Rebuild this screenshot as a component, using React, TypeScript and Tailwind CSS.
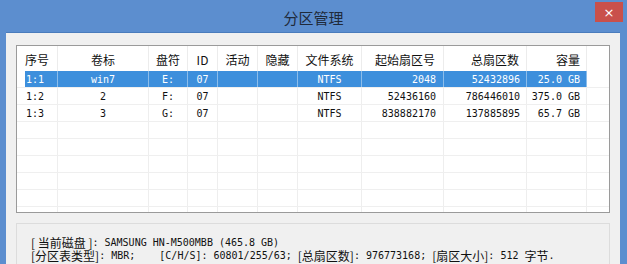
const cols = "grid grid-cols-[33px_91px_39px_30px_40px_40px_64px_82px_83px_60px_1fr]";

const headers = [
  { t: "序号", a: "justify-start" },
  { t: "卷标", a: "justify-center" },
  { t: "盘符", a: "justify-center" },
  { t: "ID", a: "justify-center" },
  { t: "活动", a: "justify-center" },
  { t: "隐藏", a: "justify-center" },
  { t: "文件系统", a: "justify-center" },
  { t: "起始扇区号", a: "justify-end pr-[8px]" },
  { t: "总扇区数", a: "justify-end pr-[7px]" },
  { t: "容量", a: "justify-end pr-[6px]" },
];

const rows = [
  ["1:1", "win7", "E:", "07", "", "", "NTFS", "2048", "52432896", "25.0 GB"],
  ["1:2", "2", "F:", "07", "", "", "NTFS", "52436160", "786446010", "375.0 GB"],
  ["1:3", "3", "G:", "07", "", "", "NTFS", "838882170", "137885895", "65.7 GB"],
];

const align = [
  "justify-start pl-[1px]",
  "justify-center",
  "justify-center",
  "justify-center",
  "justify-center",
  "justify-center",
  "justify-center",
  "justify-end pr-[7px]",
  "justify-end pr-[6px]",
  "justify-end pr-[6px]",
];

const mono = "font-['DejaVu_Sans_Mono','Liberation_Mono',monospace]";
const cjk = "font-['Noto_Sans_CJK_SC','Liberation_Sans',sans-serif]";
const cjkIn = `${cjk} inline-block align-top h-[13px] text-[12px] leading-[13px]`;

function Row({ cells, selected }: { cells: string[]; selected?: boolean }) {
  return (
    <div className={`${cols} h-[17px] border-b border-[#efefef] pl-[8px]`}>
      {cells.map((c, i) => (
        <div
          key={i}
          className={`flex items-center pt-[2px] border-r text-[10px] leading-none ${mono} ${align[i]} ${
            selected ? "bg-[#3d8fdc] text-white border-[#8cbdea]" : "text-[#111] border-[#eeeeee]"
          }`}
        >
          {c}
        </div>
      ))}
      <div />
    </div>
  );
}

export default function App() {
  return (
    <div className="w-[627px] h-[264px] overflow-hidden bg-[#5c8ecf] flex flex-col">
      <div className="h-[32px] relative flex items-center justify-center pt-[4px]">
        <span className={`text-[15px] text-[#1f2a3a] ${cjk}`}>分区管理</span>
        <div className="absolute right-[4px] top-[2px] w-[28px] h-[20px] bg-[#c9504b] flex items-center justify-center text-white text-[13px] leading-none font-['DejaVu_Sans',sans-serif]">
          ×
        </div>
      </div>
      <div className="flex-1 ml-[6px] mr-[7px] bg-[#f0f0f0] border-t border-[#4a7cbc] px-[10px] pt-[12px] flex flex-col">
        <div className="h-[168px] border border-[#9a9a9a] bg-white overflow-hidden">
          <div className={`${cols} h-[25px] pl-[8px]`}>
            {headers.map((h, i) => (
              <div
                key={i}
                className={`flex items-center pt-[3px] border-r border-[#ececec] text-[12px] text-[#111] ${cjk} ${h.a}`}
              >
                {h.t}
              </div>
            ))}
            <div />
          </div>
          {rows.map((r, i) => (
            <Row key={i} cells={r} selected={i === 0} />
          ))}
          {Array.from({ length: 6 }).map((_, i) => (
            <Row key={"e" + i} cells={["", "", "", "", "", "", "", "", "", ""]} />
          ))}
        </div>
        <div className="mt-[10px] flex-1 border border-[#dcdcdc] border-b-0 pl-[14px] pt-[12px] text-[#111]">
          <div className={`${mono} text-[10px] leading-[13px] h-[13px] whitespace-pre`}>
            <span className={cjkIn}>[ 当前磁盘 ]</span>: SAMSUNG HN-M500MBB (465.8 GB)
          </div>
          <div className={`${mono} text-[10px] leading-[13px] h-[13px] whitespace-pre`}>
            <span className={cjkIn}>[分区表类型]</span>: MBR;    [C/H/S]: 60801/255/63; <span className={cjkIn}>[总扇区数]</span>: 976773168; <span className={cjkIn}>[扇区大小]</span>: 512 <span className={cjkIn}>字节</span>.
          </div>
        </div>
      </div>
    </div>
  );
}
